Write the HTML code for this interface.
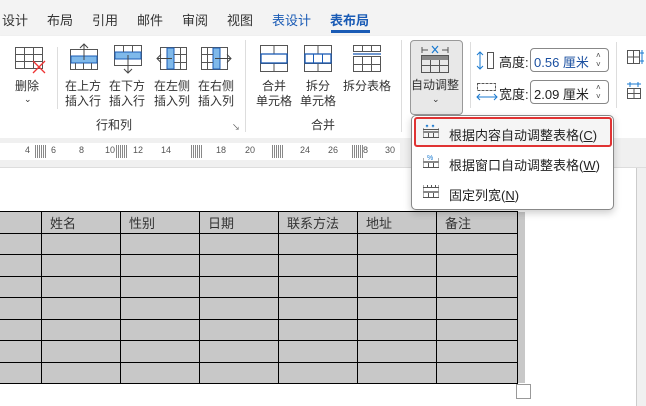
<!DOCTYPE html>
<html><head><meta charset="utf-8"><style>
*{margin:0;padding:0;box-sizing:border-box}
body{width:646px;height:406px;overflow:hidden;position:relative;background:#fff;font-family:"Liberation Sans","Noto Sans CJK SC",sans-serif;color:#222;font-size:12px}
.a{position:absolute;white-space:nowrap}
.tab{position:absolute;top:10px;font-size:13px;color:#333}
.lbl{position:absolute;font-size:12px;color:#333;text-align:center;line-height:15px}
.sep{position:absolute;width:1px;background:#ddd}
td{border:1.5px solid #000;background:#c8c8c8;height:21.5px;font-size:13px;color:#333;padding-left:8px;vertical-align:middle}
</style></head><body>
<div class="a" style="left:0;top:0;width:646px;height:36px;background:#f3f3f3"></div>
<div class="tab" style="left:2px">设计</div>
<div class="tab" style="left:47px">布局</div>
<div class="tab" style="left:92px">引用</div>
<div class="tab" style="left:137px">邮件</div>
<div class="tab" style="left:182px">审阅</div>
<div class="tab" style="left:227px">视图</div>
<div class="tab" style="left:272px;color:#1a5bb5">表设计</div>
<div class="tab" style="left:330px;color:#1a5bb5;font-weight:bold">表布局</div>
<div class="a" style="left:331px;top:30px;width:39px;height:3px;background:#1a5bb5"></div>
<div class="a" style="left:0;top:36px;width:646px;height:102px;background:#fff;box-shadow:0 1px 2px #ccc"></div>
<svg class="a" style="left:15px;top:47px" width="32" height="30"><g fill="none" stroke="#555" stroke-width="1"><rect x="0.5" y="0.5" width="27" height="21"/><line x1="0" y1="7.5" x2="28" y2="7.5"/><line x1="0" y1="14.5" x2="28" y2="14.5"/><line x1="9.5" y1="0" x2="9.5" y2="22"/><line x1="18.5" y1="0" x2="18.5" y2="22"/></g><path d="M18 14l12 12M30 14l-12 12" stroke="#e33" stroke-width="1.3"/></svg>
<div class="lbl" style="left:15px;top:79px">删除</div>
<div class="lbl" style="left:24px;top:92px;font-size:9px">⌄</div>
<div class="sep" style="left:57px;top:47px;height:62px"></div>
<svg class="a" style="left:69px;top:43px" width="30" height="28"><g fill="none" stroke="#555"><rect x="1.5" y="6.5" width="27" height="20"/></g><rect x="2" y="13" width="26" height="7" fill="#7fb9ea" stroke="#1a5bb5"/><path d="M6.5 20v6M14.5 20v6M22.5 20v6" stroke="#555"/><path d="M15 17V1M11 5l4-4 4 4" stroke="#444" fill="none"/></svg>
<div class="lbl" style="left:65px;top:79px">在上方<br>插入行</div>
<svg class="a" style="left:113px;top:45px" width="30" height="30"><g fill="none" stroke="#555"><rect x="1.5" y="0.5" width="27" height="20"/></g><rect x="2" y="7" width="26" height="7" fill="#7fb9ea" stroke="#1a5bb5"/><path d="M10.5 1v6M19.5 1v6" stroke="#555"/><path d="M15 10v18M11 24l4 4 4-4" stroke="#444" fill="none"/></svg>
<div class="lbl" style="left:109px;top:79px">在下方<br>插入行</div>
<svg class="a" style="left:156px;top:47px" width="31" height="24"><rect x="4.5" y="0.5" width="26" height="22" fill="none" stroke="#555"/><rect x="11" y="1" width="7" height="21" fill="#7fb9ea" stroke="#1a5bb5"/><path d="M18 7.5h12M18 15.5h12M24.5 1v21" stroke="#555"/><path d="M16 11.5H1M5 7.5l-4 4 4 4" stroke="#444" fill="none"/></svg>
<div class="lbl" style="left:154px;top:79px">在左侧<br>插入列</div>
<svg class="a" style="left:201px;top:47px" width="31" height="24"><rect x="0.5" y="0.5" width="26" height="22" fill="none" stroke="#555"/><rect x="12" y="1" width="7" height="21" fill="#7fb9ea" stroke="#1a5bb5"/><path d="M1 7.5h11M1 15.5h11M6.5 1v21" stroke="#555"/><path d="M14 11.5h16M26 7.5l4 4-4 4" stroke="#444" fill="none"/></svg>
<div class="lbl" style="left:198px;top:79px">在右侧<br>插入列</div>
<div class="lbl" style="left:96px;top:118px">行和列</div>
<div class="a" style="left:232px;top:122px;font-size:8px;color:#555">↘</div>
<div class="sep" style="left:245px;top:40px;height:92px"></div>
<svg class="a" style="left:260px;top:45px" width="29" height="28"><rect x="0.5" y="0.5" width="27" height="26" fill="none" stroke="#555"/><path d="M14 1v8M1 18.5h27M14 19v8" stroke="#555"/><rect x="1" y="9" width="26" height="9" fill="#fff" stroke="#1a5bb5" stroke-width="1.3"/></svg>
<div class="lbl" style="left:256px;top:79px">合并<br>单元格</div>
<svg class="a" style="left:304px;top:45px" width="29" height="28"><rect x="0.5" y="0.5" width="27" height="26" fill="none" stroke="#555"/><path d="M1 18.5h27M14 19v8M14 1v8" stroke="#555"/><rect x="1" y="9" width="26" height="9" fill="none" stroke="#1a5bb5" stroke-width="1.3"/><path d="M9.5 9v9M18.5 9v9" stroke="#1a5bb5"/></svg>
<div class="lbl" style="left:300px;top:79px">拆分<br>单元格</div>
<svg class="a" style="left:353px;top:45px" width="29" height="28"><g fill="none" stroke="#555"><rect x="0.5" y="0.5" width="27" height="6"/><rect x="0.5" y="11.5" width="27" height="15"/><path d="M9.5 0v7M18.5 0v7M1 19.5h27M9.5 12v15M18.5 12v15"/></g><path d="M0 9h28" stroke="#1a5bb5" stroke-width="1.2"/></svg>
<div class="lbl" style="left:343px;top:79px">拆分表格</div>
<div class="lbl" style="left:311px;top:118px">合并</div>
<div class="sep" style="left:401px;top:40px;height:92px"></div>
<div class="a" style="left:410px;top:40px;width:53px;height:75px;background:#e8e8e8;border:1px solid #999;border-radius:4px"></div>
<svg class="a" style="left:421px;top:44px" width="30" height="30"><path d="M1 3v6M27 3v6M1 6h6M21 6h6" stroke="#555" fill="none"/><path d="M11 2l6 7M17 2l-6 7" stroke="#1a7ad0" stroke-width="1.2"/><rect x="0.5" y="11.5" width="27" height="17" fill="none" stroke="#555"/><rect x="1" y="12" width="26" height="4" fill="#888"/><path d="M1 21.5h27M9.5 16v13M18.5 16v13" stroke="#555"/></svg>
<div class="lbl" style="left:411px;top:78px">自动调整</div>
<div class="lbl" style="left:432px;top:92px;font-size:9px">⌄</div>
<div class="sep" style="left:470px;top:42px;height:66px"></div>
<svg class="a" style="left:476px;top:51px" width="22" height="20"><path d="M4 1v17M1 4l3-3 3 3M1 15l3 3 3-3" stroke="#1a7ad0" fill="none"/><rect x="11.5" y="1.5" width="6" height="16" fill="none" stroke="#555"/></svg>
<div class="a" style="left:499px;top:52px;font-size:13px">高度:</div>
<div class="a" style="left:530px;top:48px;width:79px;height:24px;border:1px solid #888;border-radius:4px;font-size:13px;padding:3px 3px;color:#1a4fa0">0.56 厘米</div>
<div class="a" style="left:596px;top:51px;font-size:8px;color:#444;line-height:9px">˄<br>˅</div>
<svg class="a" style="left:476px;top:82px" width="22" height="20"><rect x="1.5" y="1.5" width="18" height="7" fill="none" stroke="#555" stroke-dasharray="3 1"/><path d="M1 15h20M4 12l-3 3 3 3M18 12l3 3-3 3" stroke="#1a7ad0" fill="none"/></svg>
<div class="a" style="left:499px;top:84px;font-size:13px">宽度:</div>
<div class="a" style="left:530px;top:80px;width:79px;height:24px;border:1px solid #888;border-radius:4px;font-size:13px;padding:3px 3px">2.09 厘米</div>
<div class="a" style="left:596px;top:83px;font-size:8px;color:#444;line-height:9px">˄<br>˅</div>
<div class="sep" style="left:616px;top:42px;height:66px"></div>
<svg class="a" style="left:627px;top:50px" width="19" height="16"><rect x="0.5" y="0.5" width="12" height="13" fill="none" stroke="#555"/><path d="M6.5 0v14M1 7h12" stroke="#555"/><path d="M15 0v14M13 3h4M13 11h4" stroke="#1a7ad0"/></svg>
<svg class="a" style="left:627px;top:82px" width="19" height="18"><path d="M3 0v5M11 0v5M0 2h14" stroke="#1a7ad0"/><rect x="0.5" y="6.5" width="13" height="10" fill="none" stroke="#555"/><path d="M7 7v10M1 11.5h13" stroke="#555"/></svg>
<div class="a" style="left:0;top:138px;width:646px;height:30px;background:#f0f0f0;border-bottom:1px solid #ddd"></div>
<div class="a" style="left:0;top:143px;width:400px;height:17px;background:#fff"></div>
<div class="a" style="top:145px;left:0;font-size:9px;color:#555;width:420px;height:14px">
<span class="a" style="left:25px">4</span><span class="a" style="left:35px;width:11px;height:13px;background:repeating-linear-gradient(90deg,#888 0 1px,#fff 1px 2px)"></span><span class="a" style="left:51px">6</span><span class="a" style="left:79px">8</span><span class="a" style="left:105px">10</span><span class="a" style="left:116px;width:11px;height:13px;background:repeating-linear-gradient(90deg,#888 0 1px,#fff 1px 2px)"></span><span class="a" style="left:133px">12</span><span class="a" style="left:161px">14</span><span class="a" style="left:191px;width:11px;height:13px;background:repeating-linear-gradient(90deg,#888 0 1px,#fff 1px 2px)"></span><span class="a" style="left:216px">18</span><span class="a" style="left:245px">20</span><span class="a" style="left:272px;width:11px;height:13px;background:repeating-linear-gradient(90deg,#888 0 1px,#fff 1px 2px)"></span><span class="a" style="left:300px">24</span><span class="a" style="left:328px">26</span><span class="a" style="left:352px;width:11px;height:13px;background:repeating-linear-gradient(90deg,#888 0 1px,#fff 1px 2px)"></span><span class="a" style="left:363px">8</span><span class="a" style="left:385px">30</span></div>
<div class="a" style="left:636px;top:168px;width:10px;height:238px;background:#f0f0f0;border-left:1px solid #ccc"></div>
<div class="a" style="left:518px;top:212px;width:7px;height:171px;background:#c8c8c8"></div>
<table class="a" style="left:-9px;top:211px;border-collapse:collapse;table-layout:fixed;width:526px">
<colgroup><col style="width:50px"><col style="width:79px"><col style="width:79px"><col style="width:79px"><col style="width:79px"><col style="width:79px"><col style="width:81px"></colgroup>
<tr><td></td><td>姓名</td><td>性别</td><td>日期</td><td>联系方法</td><td>地址</td><td>备注</td></tr>
<tr><td></td><td></td><td></td><td></td><td></td><td></td><td></td></tr>
<tr><td></td><td></td><td></td><td></td><td></td><td></td><td></td></tr>
<tr><td></td><td></td><td></td><td></td><td></td><td></td><td></td></tr>
<tr><td></td><td></td><td></td><td></td><td></td><td></td><td></td></tr>
<tr><td></td><td></td><td></td><td></td><td></td><td></td><td></td></tr>
<tr><td></td><td></td><td></td><td></td><td></td><td></td><td></td></tr>
<tr><td></td><td></td><td></td><td></td><td></td><td></td><td></td></tr>
</table>
<div class="a" style="left:516px;top:384px;width:15px;height:15px;border:1px solid #999;background:#fff"></div>
<div class="a" style="left:411px;top:115px;width:203px;height:95px;background:#fff;border:1px solid #888;border-radius:5px;box-shadow:0 3px 8px rgba(0,0,0,.2)"></div>
<div class="a" style="left:414px;top:117px;width:198px;height:30px;border:2px solid #e03333;border-radius:3px;background:#f5f5f5"></div>
<svg class="a" style="left:423px;top:124px" width="16" height="14"><path d="M3 1l2 2M5 1L3 3M9 1l2 2M11 1L9 3" stroke="#1a7ad0"/><path d="M0 4v9M16 4v9M0 5.5h16" stroke="#555"/><rect x="0" y="7" width="16" height="2" fill="#888"/><path d="M0 13.5h16M5.5 9v5M10.5 9v5" stroke="#555"/></svg>
<div class="a" style="left:449px;top:125px;font-size:13px">根据内容自动调整表格(<u>C</u>)</div>
<svg class="a" style="left:423px;top:154px" width="16" height="14"><text x="4" y="6" font-size="7" fill="#1a7ad0" font-family="Liberation Sans">%</text><path d="M0 4v9M16 4v9" stroke="#555"/><rect x="0" y="7" width="16" height="2" fill="#888"/><path d="M0 13.5h16M5.5 9v5M10.5 9v5" stroke="#555"/></svg>
<div class="a" style="left:449px;top:155px;font-size:13px">根据窗口自动调整表格(<u>W</u>)</div>
<svg class="a" style="left:423px;top:184px" width="16" height="14"><path d="M0 1v12M16 1v12M0 3.5h16M4.5 1v3M8.5 1v3M12.5 1v3" stroke="#555"/><rect x="0" y="7" width="16" height="2" fill="#888"/><path d="M0 13.5h16M5.5 9v5M10.5 9v5" stroke="#555"/></svg>
<div class="a" style="left:449px;top:185px;font-size:13px">固定列宽(<u>N</u>)</div>
</body></html>
